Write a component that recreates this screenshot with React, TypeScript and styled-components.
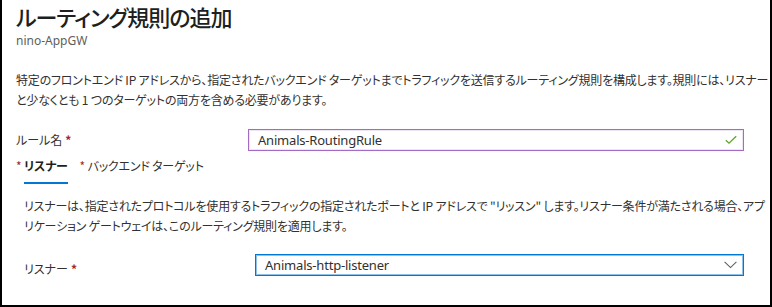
import React from 'react';
import styled, { createGlobalStyle } from 'styled-components';

const GlobalStyle = createGlobalStyle`
  html, body {
    margin: 0;
    padding: 0;
    background: #ffffff;
  }
  body {
    font-family: 'Segoe UI', 'Noto Sans', 'Noto Sans CJK JP', sans-serif;
    color: #323130;
  }
`;

const Frame = styled.div`
  box-sizing: border-box;
  width: 772px;
  height: 307px;
  border-left: 2px solid #000;
  border-right: 2px solid #000;
  border-bottom: 2px solid #000;
  padding-left: 14px;
  overflow: hidden;
  font-feature-settings: 'palt';
`;

const Title = styled.h1`
  margin: 0;
  font-family: 'Noto Sans CJK JP', sans-serif;
  font-size: 22px;
  font-weight: 500;
  line-height: 32px;
  color: #201f1e;
  letter-spacing: -1px;
`;

const Sub = styled.div`
  margin-top: 1px;
  font-size: 12px;
  line-height: 16px;
  color: #605e5c;
`;

const Desc = styled.p<{ $top: number }>`
  margin: ${(p) => p.$top}px 0 0;
  font-family: 'Noto Sans CJK JP', sans-serif;
  font-size: 12px;
  line-height: 20px;
  letter-spacing: -0.2px;
  white-space: nowrap;
  color: #323130;
`;

const Row = styled.div<{ $top: number }>`
  display: flex;
  align-items: center;
  margin-top: ${(p) => p.$top}px;
`;

const Label = styled.div<{ $w: number; $drop?: number }>`
  width: ${(p) => p.$w}px;
  flex: none;
  font-family: 'Noto Sans CJK JP', sans-serif;
  font-size: 12px;
  line-height: 20px;
  align-self: ${(p) => (p.$drop ? 'flex-start' : 'center')};
  margin-top: ${(p) => p.$drop || 0}px;
`;

const Req = styled.span`
  color: #a4262c;
  font-weight: 700;
  margin-left: 3px;
`;

const Field = styled.div<{ $w: number; $kind: 'ok' | 'focus' }>`
  box-sizing: border-box;
  width: ${(p) => p.$w}px;
  height: 22px;
  display: flex;
  align-items: center;
  justify-content: space-between;
  padding: 0 6px 0 9px;
  font-size: 13px;
  letter-spacing: -0.2px;
  color: #323130;
  border: 1px solid ${(p) => (p.$kind === 'ok' ? '#a46bc6' : '#0078d4')};
  box-shadow: ${(p) =>
    p.$kind === 'ok' ? 'inset 0 0 0 1px #efe3f6' : 'inset 0 0 0 1px rgba(0, 120, 212, 0.45)'};
`;

const Tabs = styled.div`
  display: flex;
  gap: 20px;
  margin-top: 4px;
  padding-left: 8px;
`;

const Tab = styled.div<{ $active?: boolean }>`
  position: relative;
  font-family: 'Noto Sans CJK JP', sans-serif;
  font-size: 12px;
  line-height: 20px;
  letter-spacing: -0.2px;
  padding: 1px 0 6px;
  font-weight: ${(p) => (p.$active ? 700 : 400)};
  color: ${(p) => (p.$active ? '#201f1e' : '#323130')};
  border-bottom: 2px solid ${(p) => (p.$active ? '#0078d4' : 'transparent')};
`;

const TabStar = styled.span`
  position: absolute;
  left: -8px;
  top: 1px;
  color: #a4262c;
  font-weight: 400;
`;

const Section = styled.div`
  padding-left: 8px;
`;

const Check = () => (
  <svg width="12" height="10" viewBox="0 0 12 10">
    <path d="M0.8 5.2 L4 8.2 L11.2 1.2" fill="none" stroke="#5ea42a" strokeWidth="1.3" />
  </svg>
);

const Chevron = () => (
  <svg width="13" height="8" viewBox="0 0 13 8">
    <path d="M0.6 0.8 L6.5 6.6 L12.4 0.8" fill="none" stroke="#605e5c" strokeWidth="1.1" />
  </svg>
);

export default function App() {
  return (
    <>
      <GlobalStyle />
      <Frame>
        <Title>ルーティング規則の追加</Title>
        <Sub>nino-AppGW</Sub>
        <Desc $top={21}>
          特定のフロントエンド IP アドレスから、指定されたバックエンド ターゲットまでトラフィックを送信するルーティング規則を構成します。規則には、リスナー
          <br />
          と少なくとも 1 つのターゲットの両方を含める必要があります。
        </Desc>
        <Row $top={19}>
          <Label $w={232}>
            ルール名<Req>*</Req>
          </Label>
          <Field $w={496} $kind="ok">
            <span>Animals-RoutingRule</span>
            <Check />
          </Field>
        </Row>
        <Tabs>
          <Tab $active>
            <TabStar>*</TabStar>リスナー
          </Tab>
          <Tab>
            <TabStar>*</TabStar>バックエンド ターゲット
          </Tab>
        </Tabs>
        <Section>
          <Desc $top={12}>
            リスナーは、指定されたプロトコルを使用するトラフィックの指定されたポートと IP アドレスで "リッスン" します。リスナー条件が満たされる場合、アプ
            <br />
            リケーション ゲートウェイは、このルーティング規則を適用します。
          </Desc>
          <Row $top={14}>
            <Label $w={231} $drop={9}>
              リスナー<Req>*</Req>
            </Label>
            <Field $w={489} $kind="focus">
              <span>Animals-http-listener</span>
              <Chevron />
            </Field>
          </Row>
        </Section>
      </Frame>
    </>
  );
}
